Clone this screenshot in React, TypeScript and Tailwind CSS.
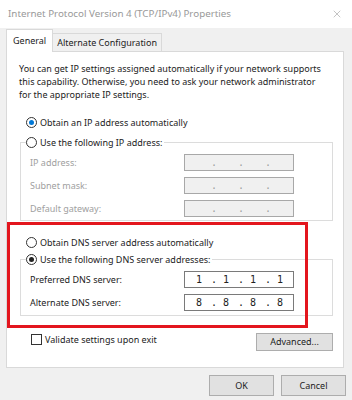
import { X } from "lucide-react";

const Radio = ({ checked, blue }: { checked?: boolean; blue?: boolean }) => (
  <span className="flex h-[11px] w-[11px] shrink-0 items-center justify-center rounded-full border border-[#333] bg-white">
    {checked && (
      <span
        className={`h-[5px] w-[5px] rounded-full ${blue ? "bg-[#0078d7]" : "bg-[#222]"}`}
      />
    )}
  </span>
);

const RadioRow = ({
  label,
  checked,
  blue,
}: {
  label: string;
  checked?: boolean;
  blue?: boolean;
}) => (
  <div className="flex h-[13px] items-center gap-[3px] leading-[13px]">
    <Radio checked={checked} blue={blue} />
    <span>{label}</span>
  </div>
);

const IpField = ({ values, disabled }: { values?: string[]; disabled?: boolean }) => {
  const segs = values ?? ["", "", "", ""];
  return (
    <div
      className={`flex h-[17px] w-[110px] items-center pl-[2px] ${
        disabled
          ? "border border-[#a8a8a8] bg-[#f0f0f0] text-[#a0a0a0]"
          : "border border-[#7a7a7a] bg-white text-[#222]"
      }`}
    >
      {segs.map((seg, i) => (
        <div key={i} className="flex items-center">
          <span className="w-[24px] text-center font-['DejaVu_Sans_Mono'] text-[10px]">
            {seg}
          </span>
          {i < 3 && (
            <span className="w-[3px] text-center font-['DejaVu_Sans_Mono'] text-[10px]">
              .
            </span>
          )}
        </div>
      ))}
    </div>
  );
};

const FieldRow = ({
  label,
  values,
  disabled,
}: {
  label: string;
  values?: string[];
  disabled?: boolean;
}) => (
  <div className="flex h-[17px] items-center">
    <span className={`w-[154px] ${disabled ? "text-[#a0a0a0]" : "text-[#222]"}`}>
      {label}
    </span>
    <IpField values={values} disabled={disabled} />
  </div>
);

const App = () => {
  return (
    <div className="relative h-[400px] w-[352px] overflow-hidden bg-[#f0f0f0] font-['Noto_Sans',sans-serif] text-[9px] text-[#222]">
      {/* title bar */}
      <div className="flex h-[28px] items-center justify-between bg-white pl-[8px] pr-[9px] text-[9.8px] text-[#999]">
        <span>Internet Protocol Version 4 (TCP/IPv4) Properties</span>
        <X size={12} strokeWidth={1} className="text-[#888]" />
      </div>

      {/* tabs */}
      <div className="flex h-[23px] items-end pl-[6px]">
        <div className="relative z-10 -mb-px flex h-[23px] items-center border-x border-t border-[#d9d9d9] bg-white pl-[6px] pr-[6px] pb-[1px]">
          General
        </div>
        <div className="flex h-[18px] items-center border-r border-t border-[#d9d9d9] bg-[#f0f0f0] px-[4px]">
          Alternate Configuration
        </div>
      </div>

      {/* panel */}
      <div className="mx-[6px] flex h-[317px] w-[338px] flex-col border border-[#d9d9d9] bg-white pl-[13px] pt-[10px]">
        <p className="-ml-px whitespace-nowrap leading-[13px]">
          You can get IP settings assigned automatically if your network supports
          <br />
          this capability. Otherwise, you need to ask your network administrator
          <br />
          for the appropriate IP settings.
        </p>

        <div className="ml-[6px] mt-[15px]">
          <RadioRow label="Obtain an IP address automatically" checked blue />
        </div>

        <fieldset className="mt-[7px] w-[313px] border border-[#dcdcdc] pb-[3px] pl-[9px]">
          <legend className="ml-[-4px] pr-[2px]">
            <RadioRow label="Use the following IP address:" />
          </legend>
          <div className="mt-[5px] flex flex-col gap-[6px]">
            <FieldRow label="IP address:" disabled />
            <FieldRow label="Subnet mask:" disabled />
            <FieldRow label="Default gateway:" disabled />
          </div>
        </fieldset>

        <div className="ml-[6px] mt-[15px]">
          <RadioRow label="Obtain DNS server address automatically" />
        </div>

        <fieldset className="mt-[4px] w-[313px] border border-[#dcdcdc] pb-[4px] pl-[9px]">
          <legend className="ml-[-4px] pr-[2px]">
            <RadioRow label="Use the following DNS server addresses:" checked />
          </legend>
          <div className="mt-[5px] flex flex-col gap-[6px]">
            <FieldRow label="Preferred DNS server:" values={["1", "1", "1", "1"]} />
            <FieldRow label="Alternate DNS server:" values={["8", "8", "8", "8"]} />
          </div>
        </fieldset>

        <div className="mt-[17px] flex w-[313px] items-start justify-between">
          <div className="ml-[11px] flex h-[13px] items-center gap-[3px]">
            <span className="h-[11px] w-[11px] border border-[#333] bg-white" />
            <span>Validate settings upon exit</span>
          </div>
          <button className="h-[18px] w-[77px] border border-[#adadad] bg-[#e1e1e1] text-[#222]">
            Advanced...
          </button>
        </div>
      </div>

      {/* footer */}
      <div className="flex justify-end gap-[7px] pr-[6px] pt-[7px]">
        <button className="h-[21px] w-[65px] border border-[#adadad] bg-[#e1e1e1]">OK</button>
        <button className="h-[21px] w-[65px] border border-[#adadad] bg-[#e1e1e1]">
          Cancel
        </button>
      </div>

      {/* red annotation box */}
      <div className="pointer-events-none absolute left-[7px] top-[222px] h-[106px] w-[301px] border-[3px] border-[#e3161e]" />
    </div>
  );
};

export default App;
